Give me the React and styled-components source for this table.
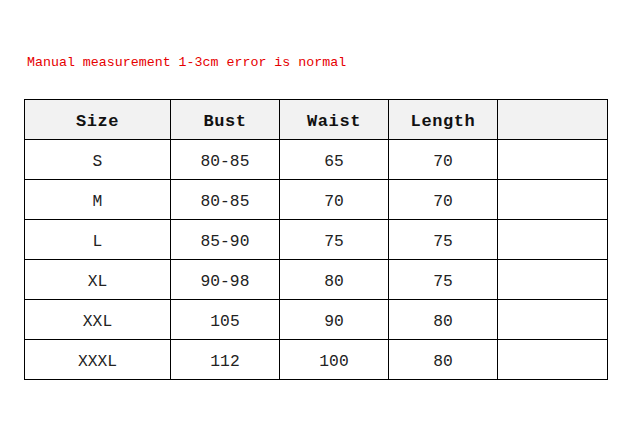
import React from "react";
import styled, { createGlobalStyle } from "styled-components";

const Global = createGlobalStyle`
  html, body { margin: 0; padding: 0; background: #fff; }
  body { font-family: "Liberation Mono", "DejaVu Sans Mono", monospace; }
`;

const Page = styled.div`
  width: 629px;
  height: 437px;
  padding: 54px 0 0 24px;
  box-sizing: border-box;
`;

const Note = styled.div`
  color: #e60000;
  font-size: 13.3px;
  line-height: 18px;
  height: 18px;
  padding-left: 3px;
  margin-bottom: 27px;
`;

const Table = styled.table`
  border-collapse: collapse;
  table-layout: fixed;
  width: 583px;
`;

const Col = styled.col`
  width: ${(p) => p.$w}px;
`;

const HeadCell = styled.th`
  height: 36px;
  padding: 3px 0 0;
  border: 1px solid #000;
  background: #f2f2f2;
  font-size: 17px;
  font-weight: bold;
  letter-spacing: 0.6px;
  color: #111;
  text-align: center;
  vertical-align: middle;
`;

const Cell = styled.td`
  height: 36px;
  padding: 3px 0 0;
  border: 1px solid #000;
  font-size: 16.3px;
  color: #222;
  text-align: center;
  vertical-align: middle;
`;

const headers = ["Size", "Bust", "Waist", "Length", ""];
const rows = [
  ["S", "80-85", "65", "70", ""],
  ["M", "80-85", "70", "70", ""],
  ["L", "85-90", "75", "75", ""],
  ["XL", "90-98", "80", "75", ""],
  ["XXL", "105", "90", "80", ""],
  ["XXXL", "112", "100", "80", ""],
];
const widths = [146, 109, 109, 109, 110];

export default function App() {
  return (
    <>
      <Global />
      <Page>
        <Note>Manual measurement 1-3cm error is normal</Note>
        <Table>
          <colgroup>
            {widths.map((w, i) => (
              <Col key={i} $w={w} />
            ))}
          </colgroup>
          <thead>
            <tr>
              {headers.map((h, i) => (
                <HeadCell key={i}>{h}</HeadCell>
              ))}
            </tr>
          </thead>
          <tbody>
            {rows.map((r, i) => (
              <tr key={i}>
                {r.map((c, j) => (
                  <Cell key={j}>{c}</Cell>
                ))}
              </tr>
            ))}
          </tbody>
        </Table>
      </Page>
    </>
  );
}
